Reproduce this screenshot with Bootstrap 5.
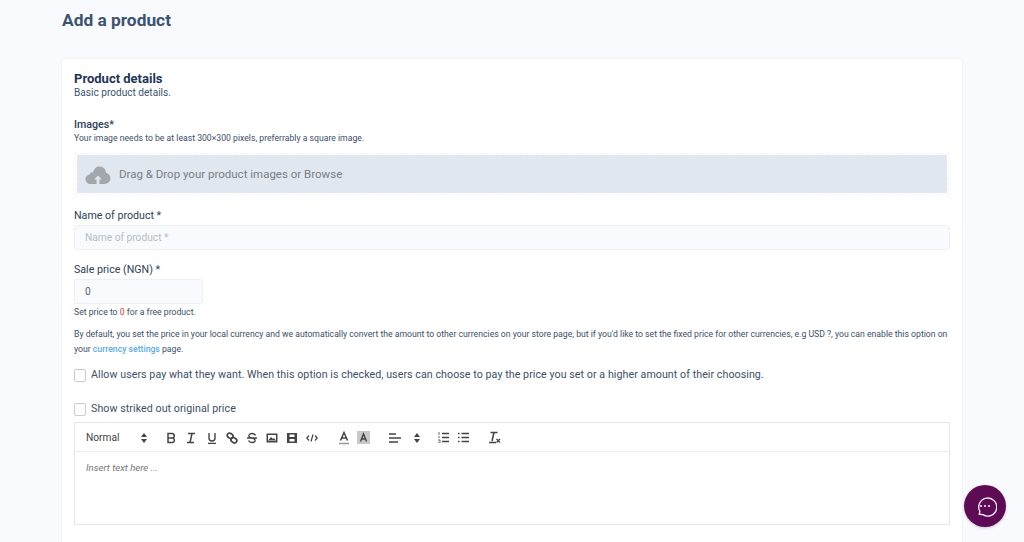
<!DOCTYPE html>
<html lang="en"><head><meta charset="utf-8"><title>Add a product</title>
<link href="https://cdn.jsdelivr.net/npm/bootstrap@5.3.0/dist/css/bootstrap.min.css" rel="stylesheet">
<style>
html,body{height:542px;overflow:hidden}
body{background:#f9fafe;font-family:Roboto,sans-serif;color:#2d4059}
.page-wrap{width:900px;margin-left:62px}
.page-title{font-size:17.33px;font-weight:700;color:#3c5470;line-height:20px;padding-top:10px;height:59px;margin:0}
.panel{background:#fff;border-radius:4px;box-shadow:0 0 2px rgba(60,80,120,.12);padding:12px 12px 40px;height:600px}
.panel-title{font-size:13px;font-weight:700;color:#1f3555;line-height:15px;margin:0}
.panel-sub{font-size:10.1px;line-height:13px;color:#3c5470;margin-bottom:19px}
.lbl{font-size:10.67px;line-height:14px;color:#2d4059;margin:0;display:block}
.lbl-strong{font-weight:500}
.lbl-name{margin-top:16px}
.lbl-sale{margin-top:13px}
.hint{font-size:8.67px;line-height:12px;color:#3c4f68}
.hint-free{margin-top:2px}
.hint-long{margin-top:9px;line-height:14.5px}
.drop{margin:11px 3px 0;padding-top:1px;background:#e1e7ef;height:38px;outline:1px dashed #f4f5f8;outline-offset:1px;color:#7b7f85;font-size:11.5px}
.fld{background:#f9fafe;border:1px solid #eef0f6;border-radius:3px;height:25px;font-size:10.2px;padding:0 10px;color:#5a6472;box-shadow:none;margin-top:2px}
.fld::placeholder{color:#b4bcc8}
.fld:focus{background:#f9fafe}
.fld-sm{width:129px}
.zero{color:#e53935}
.cur{color:#5aace8;font-weight:500;text-decoration:none}
.opt{gap:5px;font-size:10.67px;letter-spacing:.06px;line-height:14px;color:#3c4f68}
.opt-first{margin-top:12px}
.opt-second{margin-top:20px}
.chk{width:12px;height:13px;border:1px solid #c6ccd4;border-radius:2px;margin:0;flex:none;background:#fff;appearance:none}
.editor{border:1px solid #e4e6ea;height:103px;margin-top:6px}
.tools{height:29px;border-bottom:1px solid #eceef1;color:#444;padding-left:11px;padding-top:1px}
.tools svg{flex:none;display:block}
.tool-sel{font-size:10.2px;color:#444;width:48px}
.ed-body{font-size:9.6px;font-style:italic;color:#777;padding:9px 11px}
.gap7{margin-left:7px}.gap8{margin-left:8px}.gap9{margin-left:9px}.gap13{margin-left:13px}.gap18{margin-left:18px}.gap19{margin-left:19px}.gap20{margin-left:20px}
.chat{position:fixed;left:964px;top:485px;width:42px;height:42px;border-radius:50%;background:#5e0b55;box-shadow:0 1px 3px rgba(0,0,0,.2)}
</style></head><body>
<div class="page-wrap">
<h1 class="page-title">Add a product</h1>
<div class="panel">
  <h2 class="panel-title">Product details</h2>
  <div class="panel-sub">Basic product details.</div>
  <label class="lbl lbl-strong">Images*</label>
  <div class="hint">Your image needs to be at least 300×300 pixels, preferrably a square image.</div>
  <div class="drop d-flex align-items-center">
    <svg class="ms-2" width="26" height="18" viewBox="0 0 26 18"><path fill="#a3a6aa" d="M6 18c-3 0-5.500-2.100-5.500-4.800 0-2.300 1.700-4 4-4.600C5 7 6 6 8 6.200 9 2.500 11.500.5 14.500.5c3.500 0 6.300 2.700 6.500 6.200 2.600.6 4.500 2.900 4.500 5.600 0 3.200-2.700 5.700-6 5.700z"/><path fill="#e1e7ef" d="M13 9.500l-3.800 4h2.400V18h2.800v-4.500h2.400z"/></svg>
    <span class="ms-2">Drag &amp; Drop your product images or Browse</span>
  </div>
  <label class="lbl lbl-name">Name of product *</label>
  <input class="form-control fld" placeholder="Name of product *">
  <label class="lbl lbl-sale">Sale price (NGN) *</label>
  <input class="form-control fld fld-sm" value="0">
  <div class="hint hint-free">Set price to <span class="zero">0</span> for a free product.</div>
  <div class="hint hint-long">By default, you set the price in your local currency and we automatically convert the amount to other currencies on your store page, but if you'd like to set the fixed price for other currencies, e.g USD ?, you can enable this option on your <a class="cur" href="#">currency settings</a> page.</div>
  <div class="d-flex align-items-center opt opt-first"><input type="checkbox" class="chk"><span>Allow users pay what they want. When this option is checked, users can choose to pay the price you set or a higher amount of their choosing.</span></div>
  <div class="d-flex align-items-center opt opt-second"><input type="checkbox" class="chk"><span>Show striked out original price</span></div>
  <div class="editor">
    <div class="tools d-flex align-items-center">
      <span class="tool-sel">Normal</span>
      <svg class="gap7" width="6" height="10" viewBox="0 0 6 10"><path fill="#444" d="M3 0l3 4H0zM3 10L0 6h6z"/></svg>
      <svg class="gap18" width="12" height="12" viewBox="0 0 12 12" fill="none" stroke="#444" stroke-width="1.500"><path d="M3 1.500h4a2.200 2.200 0 010 4.500H3zM3 6h4.600a2.300 2.300 0 010 4.500H3z"/></svg>
      <svg class="gap8" width="12" height="12" viewBox="0 0 12 12" fill="none" stroke="#444" stroke-width="1.500"><path d="M3 1.500h7M2 10.500h7M7 1.500l-2 9"/></svg>
      <svg class="gap9" width="12" height="12" viewBox="0 0 12 12" fill="none" stroke="#444" stroke-width="1.400"><path d="M3 1v5a3 3 0 006 0V1M2 11.500h8"/></svg>
      <svg class="gap8" width="12" height="12" viewBox="0 0 12 12" fill="none" stroke="#444" stroke-width="1.700"><rect x="1" y="1.500" width="6" height="4.500" rx="2.200" transform="rotate(35 4 4)"/><rect x="5" y="6" width="6" height="4.500" rx="2.200" transform="rotate(35 8 8)"/></svg>
      <svg class="gap8" width="12" height="12" viewBox="0 0 12 12" fill="none" stroke="#444" stroke-width="1.300"><path d="M9.500 3.500C9 2 7.500 1.500 6 1.500 4 1.500 2.800 2.500 2.800 3.800 2.800 5 4 5.600 6 6c2 .4 3.200 1 3.200 2.300 0 1.400-1.300 2.200-3.200 2.200-1.600 0-3-.6-3.500-2M1 6h10"/></svg>
      <svg class="gap8" width="12" height="12" viewBox="0 0 12 12"><path fill="#444" fill-rule="evenodd" d="M1 1.500h10a.5.500 0 01.5.500v8a.5.500 0 01-.5.500H1a.5.500 0 01-.5-.5V2a.5.500 0 01.5-.5zM2 3v5.500h8V3z"/><path fill="#444" d="M2.500 8l2.500-3 2 2 1-1 1.500 2z"/></svg>
      <svg class="gap8" width="12" height="12" viewBox="0 0 12 12"><path fill="#444" fill-rule="evenodd" d="M1 1h10v10H1zM3.500 2.500v2.500h5V2.500zM3.500 7v2.500h5V7z"/></svg>
      <svg class="gap8" width="12" height="10" viewBox="0 0 12 10" fill="none" stroke="#444" stroke-width="1.200"><path d="M3 2.500L.8 5 3 7.500M9 2.500L11.200 5 9 7.500M7 1.500L5 8.500"/></svg>
      <svg class="gap20" width="12" height="14" viewBox="0 0 12 14" fill="none" stroke="#444" stroke-width="1.500"><path d="M2.500 9.500L6 1.500l3.500 8M3.800 7h4.400"/><path d="M1 12.500h10" stroke="#999"/></svg>
      <svg class="gap7" width="13" height="13" viewBox="0 0 13 13"><rect width="13" height="13" fill="#c8c8c8"/><path d="M3.500 10.500L6.500 3l3 7.500M4.700 8h3.600" fill="none" stroke="#444" stroke-width="1.400"/></svg>
      <svg class="gap19" width="12" height="10" viewBox="0 0 12 10" fill="none" stroke="#444" stroke-width="1.500"><path d="M0 1h7M0 5h12M0 9h9"/></svg>
      <svg class="gap13" width="6" height="10" viewBox="0 0 6 10"><path fill="#444" d="M3 0l3 4H0zM3 10L0 6h6z"/></svg>
      <svg class="gap18" width="11" height="11" viewBox="0 0 11 11" fill="none" stroke="#444"><path d="M4 1.500h7M4 5.500h7M4 9.500h7" stroke-width="1.300"/><path d="M1 0v3M0 5h2M0 8h2v3H0" stroke-width=".8"/></svg>
      <svg class="gap9" width="11" height="11" viewBox="0 0 11 11" fill="none" stroke="#444" stroke-width="1.300"><path d="M3.500 1.500H11M3.500 5.500H11M3.500 9.500H11M0 1.500h1.500M0 5.500h1.500M0 9.500h1.500"/></svg>
      <svg class="gap20" width="12" height="13" viewBox="0 0 12 13" fill="none" stroke="#444" stroke-width="1.500"><path d="M1.500 1.500h7M5 1.500l-2 8.500M0 11.500h7"/><path d="M7.500 8l3.500 3.500M11 8l-3.500 3.500" stroke-width="1.300"/></svg>
    </div>
    <div class="ed-body">Insert text here ...</div>
  </div>
</div>
</div>
<div class="chat d-flex align-items-center justify-content-center">
<svg width="24" height="24" viewBox="0 0 24 24" fill="none"><path d="M6.300 20.300l.5-3A9 9 0 1 1 10 20.700" stroke="#f1e6f1" stroke-width="1.400" stroke-linecap="round" stroke-linejoin="round"/><path d="M6.300 20.300l3.500.3" stroke="#f1e6f1" stroke-width="1.400" stroke-linecap="round"/><circle cx="8" cy="12" r="1.100" fill="#f1e6f1"/><circle cx="12" cy="12" r="1.100" fill="#f1e6f1"/><circle cx="16" cy="12" r="1.100" fill="#f1e6f1"/></svg>
</div>
</body></html>
